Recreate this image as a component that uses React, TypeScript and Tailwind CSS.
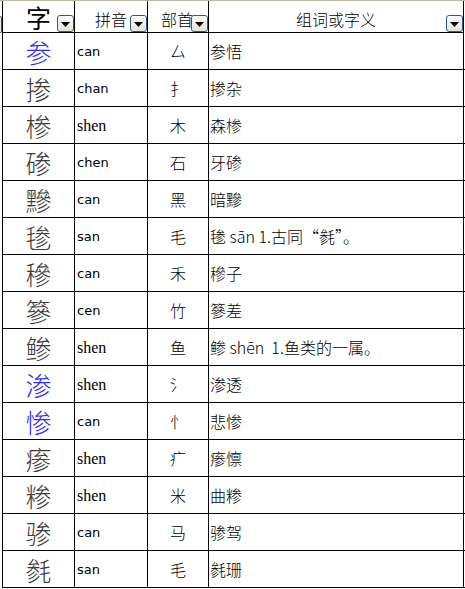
import React from 'react';

type Row = {
    zi: string;
    py: string;
    bs: string;
    ci: string;
    blue?: boolean;
    serif?: boolean;
};

const rows: Row[] = [
    { zi: '参', py: 'can', bs: '厶', ci: '参悟', blue: true },
    { zi: '掺', py: 'chan', bs: '扌', ci: '掺杂' },
    { zi: '椮', py: 'shen', bs: '木', ci: '森椮', serif: true },
    { zi: '碜', py: 'chen', bs: '石', ci: '牙碜' },
    { zi: '黲', py: 'can', bs: '黑', ci: '暗黲' },
    { zi: '毶', py: 'san', bs: '毛', ci: '毶 sān 1.古同“毵”。' },
    { zi: '穇', py: 'can', bs: '禾', ci: '穇子' },
    { zi: '篸', py: 'cen', bs: '竹', ci: '篸差' },
    { zi: '鲹', py: 'shen', bs: '鱼', ci: '鲹 shēn\u00a0\u00a01.鱼类的一属。', serif: true },
    { zi: '渗', py: 'shen', bs: '氵', ci: '渗透', blue: true, serif: true },
    { zi: '惨', py: 'can', bs: '忄', ci: '悲惨', blue: true },
    { zi: '瘆', py: 'shen', bs: '疒', ci: '瘆懔', serif: true },
    { zi: '糁', py: 'shen', bs: '米', ci: '曲糁', serif: true },
    { zi: '骖', py: 'can', bs: '马', ci: '骖驾' },
    { zi: '毵', py: 'san', bs: '毛', ci: '毵珊' },
];

const cjk = "font-['Noto_Sans_CJK_SC',sans-serif]";

function FilterButton() {
    return (
        <div className="absolute right-0 bottom-0 w-[17px] h-[17px] rounded-[3px] border border-[#2b5a8c] bg-gradient-to-b from-white to-[#e4e1d6] flex items-center justify-center">
            <svg width="9" height="5" viewBox="0 0 9 5" className="mt-[2px]">
                <path d="M0 0 H9 L4.5 5 Z" fill="#000" />
            </svg>
        </div>
    );
}

export default function App() {
    return (
        <div className={`w-[465px] h-[589px] bg-white overflow-hidden ${cjk}`}>
            {/* header */}
            <div className="flex border-t border-[#b9b9a3]">
                <div className="w-[2px] h-[32px] flex items-end">
                    <div className="w-[2px] h-[17px] rounded-r-[2px] border-r border-y border-[#2b5a8c] bg-[#ebe9e0]" />
                </div>
                <div className="flex h-[32px] border-l border-b border-black">
                    <div className="relative w-[72px] border-r border-black flex items-end justify-center text-[25px] leading-[30px] text-black">
                        字
                        <FilterButton />
                    </div>
                    <div className="relative w-[73px] border-r border-black flex items-center justify-center pt-[4px] text-[16px] font-light text-black">
                        拼音
                        <FilterButton />
                    </div>
                    <div className="relative w-[61px] border-r border-black flex items-center justify-center pt-[4px] text-[16px] font-light text-black pr-[2px]">
                        部首
                        <FilterButton />
                    </div>
                    <div className="relative w-[255px] border-r border-black flex items-center justify-center pt-[4px] text-[16px] font-light text-black">
                        组词或字义
                        <FilterButton />
                    </div>
                </div>
            </div>

            {/* body */}
            <div className="ml-[2px] flex flex-col border-l border-black w-[463px]">
                {rows.map((r, i) => (
                    <div key={i} className="flex h-[37px] border-b border-black">
                        <div
                            className={`w-[72px] border-r border-black flex items-center justify-center text-[26px] font-light ${
                                r.blue ? 'text-[#2f2ff5]' : 'text-[#3c3c3c]'
                            }`}
                        >
                            {r.zi}
                        </div>
                        <div
                            className={`w-[73px] border-r border-black flex items-center pl-[2px] pt-[2px] text-black ${
                                r.serif
                                    ? "font-['Liberation_Serif',serif] text-[16px]"
                                    : "font-['DejaVu_Sans',sans-serif] text-[13px]"
                            }`}
                        >
                            {r.py}
                        </div>
                        <div className="w-[61px] border-r border-black flex items-center justify-center text-[16px] font-light text-black">
                            {r.bs}
                        </div>
                        <div className="w-[255px] border-r border-black flex items-center pl-[1px] text-[16px] font-light text-black whitespace-pre">
                            {r.ci}
                        </div>
                    </div>
                ))}
            </div>
        </div>
    );
}
